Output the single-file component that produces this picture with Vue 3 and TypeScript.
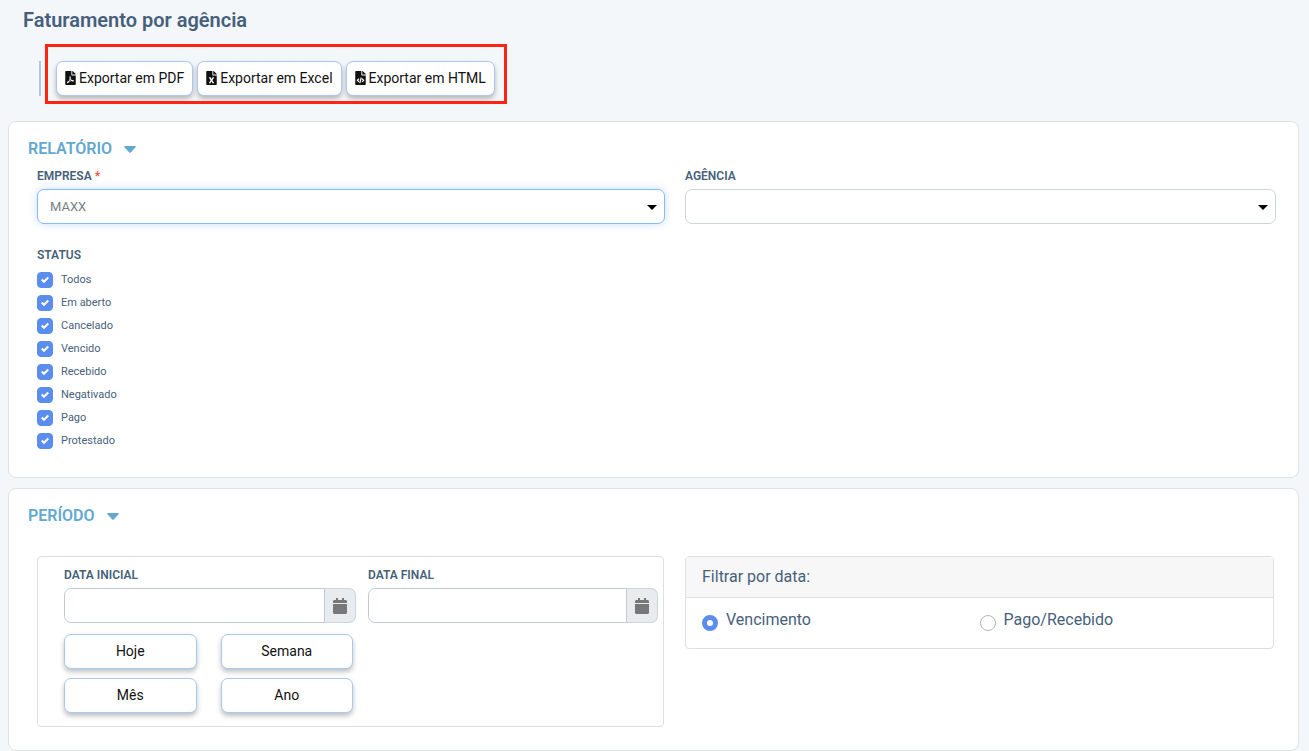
<script setup lang="ts">
import { reactive, ref } from 'vue'

interface StatusOption {
  id: string
  label: string
  checked: boolean
}

const pdfPath =
  'M181.9 256.1c-5-16-4.9-46.9-2-46.9 8.4 0 7.6 36.9 2 46.9zm-1.7 47.2c-7.7 20.2-17.3 43.3-28.4 62.7 18.3-7 39-17.2 62.9-21.9-12.7-9.6-24.9-23.4-34.5-40.8zM86.1 428.1c0 .8 13.2-5.4 34.9-40.2-6.7 6.3-29.1 24.5-34.9 40.2zM248 160h136v328c0 13.3-10.7 24-24 24H24c-13.3 0-24-10.7-24-24V24C0 10.7 10.7 0 24 0h200v136c0 13.2 10.8 24 24 24zm-8 171.8c-20-12.2-33.3-29-42.7-53.8 4.5-18.5 11.6-46.6 6.2-64.2-4.7-29.4-42.4-26.5-47.8-6.8-5 18.3-.4 44.1 8.1 77-11.6 27.6-28.7 64.6-40.8 85.8-.1 0-.1.1-.2.1-27.1 13.9-73.6 44.5-54.5 68 5.6 6.9 16 10 21.5 10 17.9 0 35.7-18 61.1-61.8 25.8-8.5 54.1-19.1 79-23.2 21.7 11.8 47.1 19.5 64 19.5 29.2 0 31.2-32 19.7-43.4-13.9-13.6-54.3-9.7-73.6-7.2zM377 105L279 7c-4.5-4.5-10.6-7-17-7h-6v128h128v-6.1c0-6.3-2.5-12.4-7-16.9zm-74.1 255.3c4.1-2.7-2.5-11.9-42.8-9 37.1 15.8 42.8 9 42.8 9z'
const excelPath =
  'M224 136V0H24C10.7 0 0 10.7 0 24v464c0 13.3 10.7 24 24 24h336c13.3 0 24-10.7 24-24V160H248c-13.2 0-24-10.8-24-24zm60.1 106.5L224 336l60.1 93.5c5.1 8-.6 18.5-10.1 18.5h-34.9c-4.4 0-8.5-2.4-10.6-6.3C208.9 405.5 192 373 192 373c-6.4 14.8-10 20-36.6 68.8-2.1 3.9-6.1 6.3-10.5 6.3H110c-9.5 0-15.2-10.5-10.1-18.5l60.3-93.5-60.3-93.5c-5.2-8 .6-18.5 10.1-18.5h34.8c4.4 0 8.5 2.4 10.6 6.3 26.1 48.8 20 33.6 36.6 68.5 0 0 6.1-11.7 36.6-68.5 2.1-3.9 6.2-6.3 10.6-6.3H274c9.5-.1 15.2 10.4 10.1 18.4zM384 121.9v6.1H256V0h6.1c6.4 0 12.5 2.5 17 7l97.9 98c4.5 4.5 7 10.6 7 16.9z'
const blankFilePath =
  'M224 136V0H24C10.7 0 0 10.7 0 24v464c0 13.3 10.7 24 24 24h336c13.3 0 24-10.7 24-24V160H248c-13.2 0-24-10.8-24-24zM384 121.9v6.1H256V0h6.1c6.4 0 12.5 2.5 17 7l97.9 98c4.5 4.5 7 10.6 7 16.9z'
const codeStroke = 'M138 280l-62 60 62 60M246 280l62 60-62 60M218 240l-52 200'
const calendarPath =
  'M12 192h424c6.6 0 12 5.4 12 12v260c0 26.5-21.5 48-48 48H48c-26.5 0-48-21.5-48-48V204c0-6.6 5.4-12 12-12zm436-44v-36c0-26.5-21.5-48-48-48h-48V12c0-6.6-5.4-12-12-12h-40c-6.6 0-12 5.4-12 12v52H160V12c0-6.6-5.4-12-12-12h-40c-6.6 0-12 5.4-12 12v52H48C21.5 64 0 85.5 0 112v36c0 6.6 5.4 12 12 12h424c6.6 0 12-5.4 12-12z'

const exportActions = [
  { label: 'Exportar em PDF', path: pdfPath, stroke: '' },
  { label: 'Exportar em Excel', path: excelPath, stroke: '' },
  { label: 'Exportar em HTML', path: blankFilePath, stroke: codeStroke },
]

const statuses = reactive<StatusOption[]>(
  ['Todos', 'Em aberto', 'Cancelado', 'Vencido', 'Recebido', 'Negativado', 'Pago', 'Protestado'].map(
    (label) => ({ id: 'status-' + label.toLowerCase().replace(' ', '-'), label, checked: true }),
  ),
)

const dates = reactive([
  { id: 'data-inicial', label: 'DATA INICIAL', value: '' },
  { id: 'data-final', label: 'DATA FINAL', value: '' },
])
const ranges = ['Hoje', 'Semana', 'Mês', 'Ano']
const filters = ['Vencimento', 'Pago/Recebido']

const company = ref('MAXX')
const agency = ref('')
const dateFilter = ref('Vencimento')
const reportOpen = ref(true)
const periodOpen = ref(true)
</script>

<template>
  <main class="page">
    <h1 class="title">Faturamento por agência</h1>

    <div class="toolbar">
      <div class="exports">
        <button v-for="a in exportActions" :key="a.label" type="button" class="btn">
          <svg class="file-icon" viewBox="0 0 384 512" aria-hidden="true">
            <path :d="a.path" fill="currentColor" />
            <path v-if="a.stroke" :d="a.stroke" fill="none" stroke="#fff" stroke-width="44" />
          </svg>
          <span>{{ a.label }}</span>
        </button>
      </div>
    </div>

    <section class="card">
      <h2 class="card-title">
        <button type="button" class="toggle" :aria-expanded="reportOpen" @click="reportOpen = !reportOpen">
          RELATÓRIO
          <svg class="caret" viewBox="0 0 12 7" aria-hidden="true"><path d="M1 0h10q1.4 0 .5 1.2L7 6.2q-1 1-2 0L.5 1.2Q-.4 0 1 0z" fill="currentColor" /></svg>
        </button>
      </h2>
      <div v-show="reportOpen" class="card-body">
        <div class="selects">
          <div class="field">
            <label class="label" for="empresa">EMPRESA <span class="required">*</span></label>
            <div class="select-box">
              <select id="empresa" v-model="company" class="select active">
                <option>MAXX</option>
              </select>
              <svg class="arrow" viewBox="0 0 10 5" aria-hidden="true"><path d="M0 0h10L5 5z" /></svg>
            </div>
          </div>
          <div class="field">
            <label class="label" for="agencia">AGÊNCIA</label>
            <div class="select-box">
              <select id="agencia" v-model="agency" class="select">
                <option value=""></option>
              </select>
              <svg class="arrow" viewBox="0 0 10 5" aria-hidden="true"><path d="M0 0h10L5 5z" /></svg>
            </div>
          </div>
        </div>

        <fieldset class="statuses">
          <legend class="label">STATUS</legend>
          <div v-for="s in statuses" :key="s.id" class="status">
            <input :id="s.id" v-model="s.checked" type="checkbox" class="check" />
            <label :for="s.id">{{ s.label }}</label>
          </div>
        </fieldset>
      </div>
    </section>

    <section class="card">
      <h2 class="card-title">
        <button type="button" class="toggle" :aria-expanded="periodOpen" @click="periodOpen = !periodOpen">
          PERÍODO
          <svg class="caret" viewBox="0 0 12 7" aria-hidden="true"><path d="M1 0h10q1.4 0 .5 1.2L7 6.2q-1 1-2 0L.5 1.2Q-.4 0 1 0z" fill="currentColor" /></svg>
        </button>
      </h2>
      <div v-show="periodOpen" class="period">
        <div class="panel dates">
          <div v-for="d in dates" :key="d.id" class="field">
            <label class="label" :for="d.id">{{ d.label }}</label>
            <div class="date-group">
              <input :id="d.id" v-model="d.value" type="text" class="date-input" />
              <button type="button" class="date-button" :aria-label="d.label">
                <svg class="calendar" viewBox="0 0 448 512" aria-hidden="true"><path :d="calendarPath" fill="currentColor" /></svg>
              </button>
            </div>
          </div>
          <div class="ranges">
            <button v-for="r in ranges" :key="r" type="button" class="btn">{{ r }}</button>
          </div>
        </div>

        <div class="panel filter">
          <div id="filter-title" class="filter-title">Filtrar por data:</div>
          <div class="filter-options" role="radiogroup" aria-labelledby="filter-title">
            <label v-for="f in filters" :key="f" class="filter-option">
              <input v-model="dateFilter" type="radio" name="date-filter" class="radio" :value="f" />
              <span>{{ f }}</span>
            </label>
          </div>
        </div>
      </div>
    </section>
  </main>
</template>

<style>
body {
  margin: 0;
  background: #f3f7fa;
}
</style>

<style scoped>
* {
  box-sizing: border-box;
}
.page {
  padding: 8px 10px 0 8px;
  font-family: Roboto, "Liberation Sans", sans-serif;
  font-size: 16px;
  line-height: 24px;
  color: #475f7b;
}
button,
input,
select {
  font-family: inherit;
}
.title {
  margin: 0 0 29px 15px;
  font-size: 20px;
  font-weight: 600;
  line-height: 24px;
  color: #475f7b;
}
.toolbar {
  display: flex;
  margin: 0 0 25px 31px;
  padding-left: 15px;
  border-left: 2px solid #aac8f0;
}
.exports {
  position: relative;
  display: flex;
  gap: 4px;
}
.exports::after {
  content: "";
  position: absolute;
  inset: -17px -12px -8px -11px;
  border: 3px solid #ff2312;
  pointer-events: none;
}
.btn {
  display: flex;
  align-items: center;
  justify-content: center;
  gap: 3px;
  height: 35px;
  padding: 0 8px 2px;
  border: 1px solid #aac8f0;
  border-radius: 7px;
  background: #fff;
  box-shadow: 0 3px 5px rgba(0, 0, 0, 0.25);
  color: #111;
  font-size: 14px;
  line-height: 20px;
  white-space: nowrap;
  cursor: pointer;
}
.file-icon {
  width: 11px;
  height: 14px;
}
.card {
  margin-bottom: 10px;
  padding: 15px 22px 28px 19px;
  border: 1px solid #dee2e6;
  border-radius: 8px;
  background: #fff;
}
.card:last-child {
  margin-bottom: 0;
  padding-bottom: 23px;
}
.card-title {
  display: flex;
  margin: 0;
  font-size: 16px;
}
.toggle {
  display: flex;
  align-items: center;
  gap: 12px;
  padding: 0;
  border: 0;
  background: none;
  color: #62a8d1;
  font-size: 16px;
  font-weight: 600;
  line-height: 24px;
  cursor: pointer;
}
.caret {
  width: 12px;
  height: 7px;
}
.card-body {
  padding: 6px 0 0 9px;
}
.selects {
  display: grid;
  grid-template-columns: 628fr 591fr;
  gap: 20px;
}
.field {
  display: flex;
  flex-direction: column;
  gap: 4px;
  min-width: 0;
}
.label {
  padding: 0;
  font-size: 12px;
  font-weight: 600;
  line-height: 18px;
  color: #475f7b;
}
.required {
  color: #f0503c;
}
.select-box {
  position: relative;
}
.select {
  display: block;
  width: 100%;
  height: 35px;
  padding: 0 24px 0 12px;
  border: 1px solid #cfd4da;
  border-radius: 7px;
  outline: 0;
  appearance: none;
  background: #fff;
  color: #777f86;
  font-size: 13px;
}
.select.active {
  border-color: #80bdff;
  box-shadow: 0 0 8px rgba(90, 141, 238, 0.3);
}
.arrow {
  position: absolute;
  top: 16px;
  right: 8px;
  width: 10px;
  height: 5px;
  pointer-events: none;
}
.statuses {
  display: flex;
  flex-direction: column;
  gap: 7px;
  margin: 22px 0 0;
  padding: 0;
  border: 0;
}
.statuses legend {
  margin-bottom: 8px;
}
.status {
  display: flex;
  gap: 8px;
  height: 16px;
  font-size: 11px;
  line-height: 15px;
}
.check {
  width: 16px;
  height: 16px;
  margin: 0;
  border: 1px solid #adb5bd;
  border-radius: 4px;
  appearance: none;
  background: #fff;
}
.check:checked {
  border-color: #5a8dee;
  background: #5a8dee url("data:image/svg+xml,%3Csvg xmlns='http://www.w3.org/2000/svg' viewBox='0 0 8 8'%3E%3Cpath fill='%23fff' d='M6.564.75l-3.59 3.612-1.538-1.55L0 4.26 2.974 7.25 8 2.193z'/%3E%3C/svg%3E") center / 8px 8px no-repeat;
}
.period {
  display: grid;
  grid-template-columns: 627fr 589fr;
  align-items: start;
  gap: 21px;
  padding: 28px 2px 0 9px;
}
.panel {
  border: 1px solid #dfdfdf;
  border-radius: 4px;
}
.dates {
  display: grid;
  grid-template-columns: 292fr 290fr;
  gap: 11px 12px;
  padding: 9px 5px 13px 26px;
}
.date-group {
  display: flex;
  height: 35px;
}
.date-input {
  flex: 1;
  min-width: 0;
  padding: 0 12px;
  border: 1px solid #c3cad3;
  border-radius: 7px 0 0 7px;
  outline: 0;
  background: #fff;
  color: #777f86;
  font-size: 13px;
}
.date-button {
  display: flex;
  align-items: center;
  justify-content: center;
  width: 31px;
  padding: 0;
  border: 1px solid #ced4da;
  border-left: 0;
  border-radius: 0 7px 7px 0;
  background: #e9ecef;
  color: #777;
  cursor: pointer;
}
.calendar {
  width: 14px;
  height: 16px;
}
.ranges {
  display: grid;
  grid-template-columns: 1fr 1fr;
  gap: 9px 24px;
  margin-right: 3px;
}
.filter-title {
  padding: 8px 16px;
  border-bottom: 1px solid #dfdfdf;
  background: #f7f7f7;
}
.filter-options {
  display: grid;
  grid-template-columns: 1fr 1fr;
  padding: 10px 16px 16px;
}
.filter-option {
  display: flex;
  align-items: flex-start;
  gap: 8px;
}
.radio {
  width: 16px;
  height: 16px;
  margin: 7px 0 0;
  border: 1px solid #adb5bd;
  border-radius: 50%;
  appearance: none;
  background: #fff;
}
.radio:checked {
  border: 5px solid #5a8dee;
}
</style>
